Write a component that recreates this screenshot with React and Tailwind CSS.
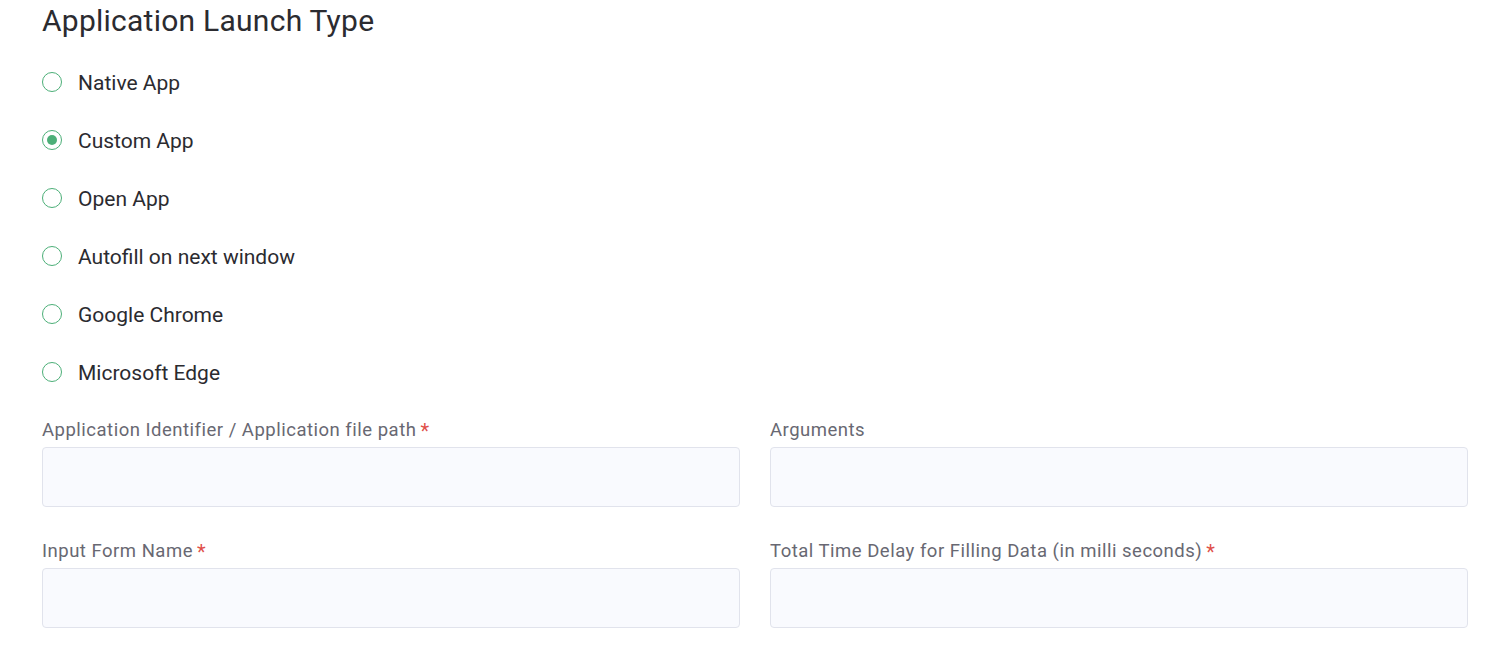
const options = [
  { label: 'Native App', checked: false },
  { label: 'Custom App', checked: true },
  { label: 'Open App', checked: false },
  { label: 'Autofill on next window', checked: false },
  { label: 'Google Chrome', checked: false },
  { label: 'Microsoft Edge', checked: false },
]

function Radio({ label, checked }) {
  return (
    <label className="flex items-center h-[58px] gap-4 cursor-pointer">
      <span className="w-5 h-5 rounded-full border-[1.5px] border-[#4caf78] flex items-center justify-center">
        {checked && <span className="w-[10px] h-[10px] rounded-full bg-[#4caf78]" />}
      </span>
      <span className="text-[21px] text-[#2b2b30] pt-[3px]">{label}</span>
    </label>
  )
}

function Field({ label, required }) {
  return (
    <div className="flex flex-col">
      <div className="text-[18.5px] tracking-[0.5px] text-[#686872] h-[36px] pt-[3px] flex items-center">
        {label}
        {required && <span className="text-[#e0504a] ml-1 text-[20px]">*</span>}
      </div>
      <input className="h-[60px] rounded-[4px] border border-[#e1e3ec] bg-[#f9fafe] px-4 outline-none" />
    </div>
  )
}

export default function App() {
  return (
    <div className="bg-white min-h-screen pl-[42px] pr-[40px] font-['Roboto',sans-serif]">
      <h1 className="text-[30px] tracking-[0.25px] text-[#2b2b30] h-[40px] flex items-center">Application Launch Type</h1>
      <div className="flex flex-col pt-[13px]">
        {options.map((o) => (
          <Radio key={o.label} {...o} />
        ))}
      </div>
      <div className="grid grid-cols-2 gap-x-[30px] gap-y-[25px] mt-[10px]">
        <Field label="Application Identifier / Application file path" required />
        <Field label="Arguments" />
        <Field label="Input Form Name" required />
        <Field label="Total Time Delay for Filling Data (in milli seconds)" required />
      </div>
    </div>
  )
}
